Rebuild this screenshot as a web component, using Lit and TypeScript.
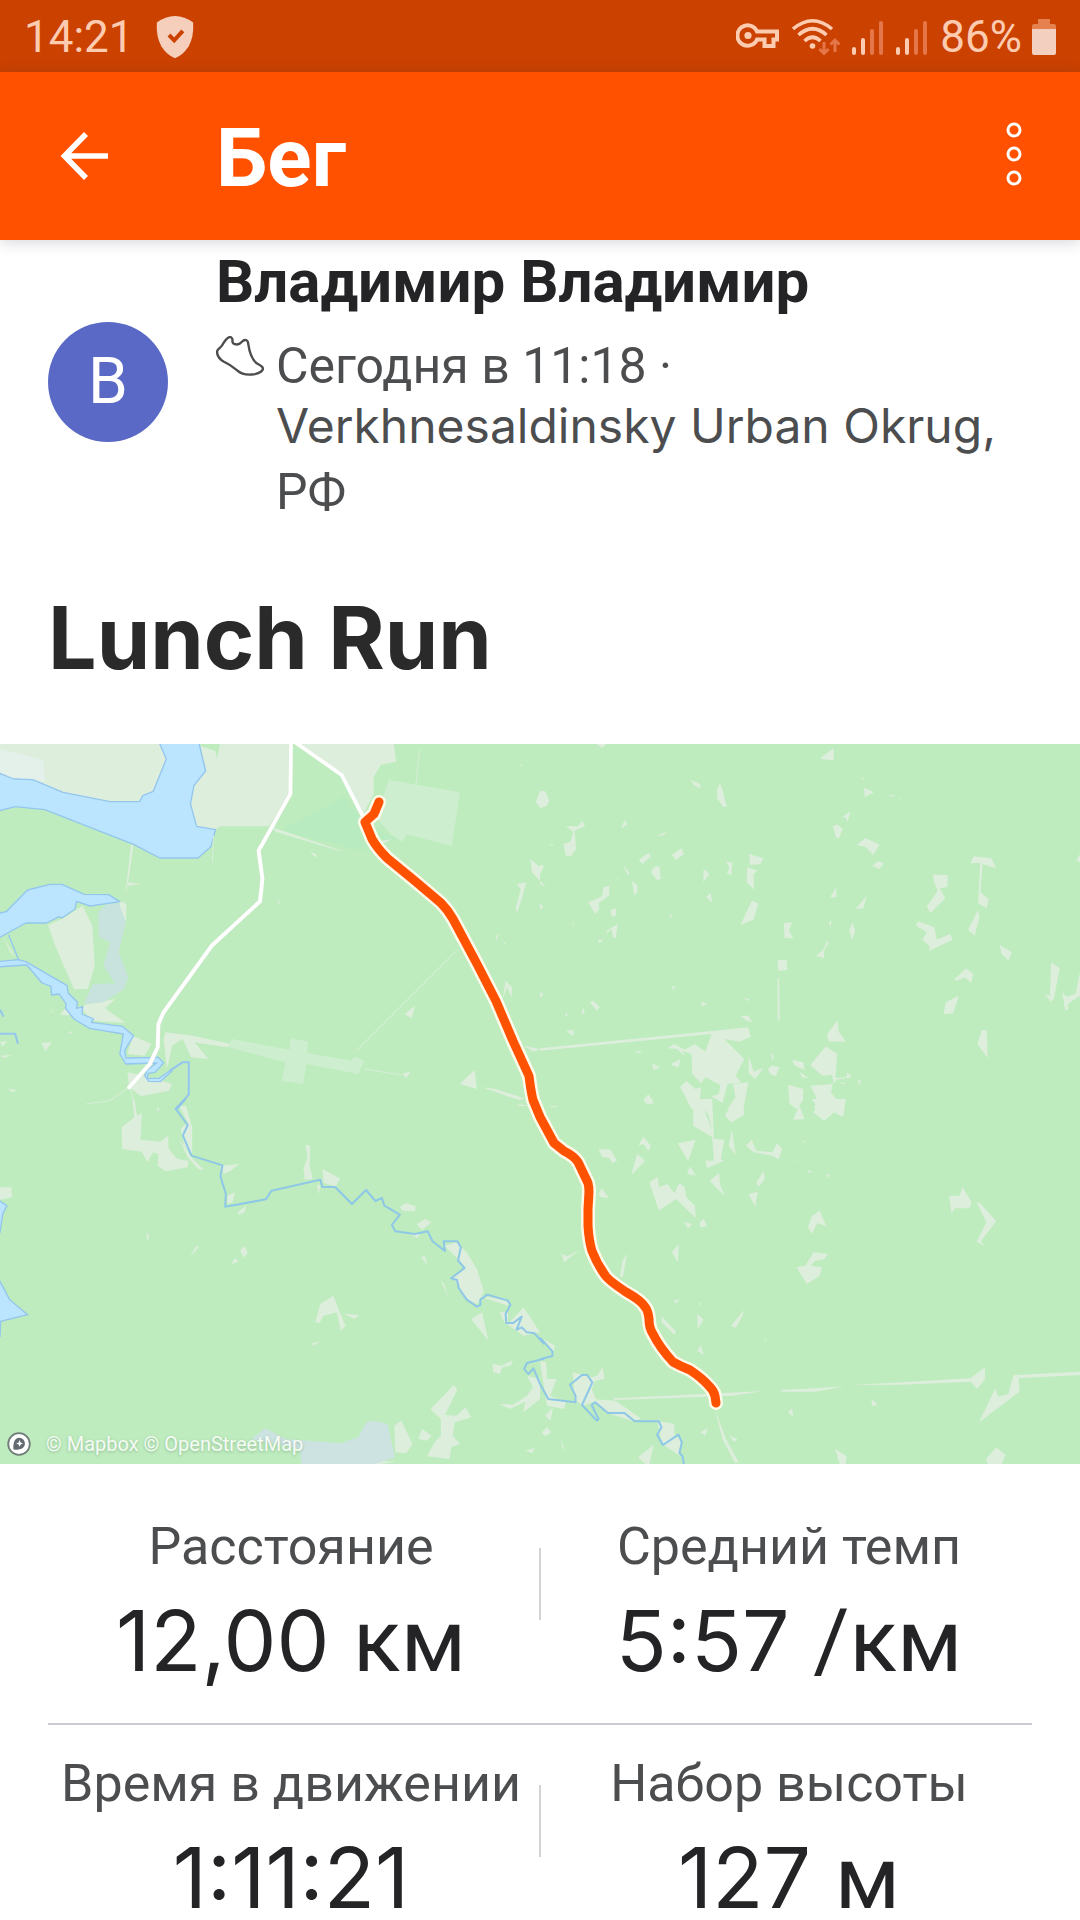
import { LitElement, html, css, svg } from "lit";
import { customElement, property } from "lit/decorators.js";

/* The map is surveyed in four tiles; each tile has its own grid, scaled into map units. */
const TILE_SCALE = "scale(.344388 .333333)";
const tile = (x: number, y: number) => `translate(${x} ${y}) ${TILE_SCALE}`;

const CLEARINGS_NW = [
  "582,22 625,35 630,60 640,10 845,10 845,165 780,262 640,262 625,272 571,262 553,195 563,140 597,96",
  "862,10 1143,10 1150,68 1105,78 1085,115 1085,165 1050,235 992,108",
  "140,558 180,540 240,500 268,560 275,680 255,750 215,750 160,620",
  "245,797 335,780 305,808 365,852 265,845 240,812",
  "200,790 240,830 175,828", "385,890 440,915 420,950 370,945",
  "370,1000 420,1010 500,1035 490,1055 410,1072 375,1045",
  "388,318 372,430 365,470 368,430 380,318", "372,430 410,434 372,440",
  "350,485 367,495 366,550 345,500", "10,595 45,655 30,640",
  "480,880 560,890 670,915 660,925 565,910 605,960 555,955 530,900 500,920 485,990 475,900",
  "900,340 918,345 918,357", "790,265 1000,338 985,335 800,278", "805,480 816,497 808,492",
  "1175,825 1205,800 1195,838", "1335,1035 1378,993 1385,1050", "1400,1045 1440,1050 1520,1078 1510,1084",
  "1168,1005 1192,997 1180,1017", "1500,435 1528,430 1515,480 1502,520 1497,510 1512,450",
  "1540,360 1568,385 1568,425 1545,400", "1468,725 1487,745 1485,775 1472,745 1460,780",
  "1440,590 1448,585 1440,605", "1460,605 1472,617 1465,615", "1568,155 1568,205 1556,190",
  "120,912 150,910 132,937", "0,910 22,906 8,922", "0,950 35,948 12,957", "20,1050 46,1052 40,1060",
  "150,820 156,805 145,822", "198,880 212,876 205,884", "1510,75 1517,80 1511,82",
  "1520,920 1568,930 1550,938", "1085,310 1140,300 1110,315", "1500,1095 1540,1100 1510,1102",
];

const FIELDS_NW = [
  "1130,123 1235,142 1335,160 1312,322 1205,292 1180,285 1170,308 1140,290 1095,240 1110,180",
  "672,900 840,932 845,898 895,908 890,942 1020,965 1030,952 1058,965 1040,1005 890,975 880,1035 818,1025 830,970 665,925",
];

const CLEARINGS_NE = [
  "165,15 192,15 180,26", "815,56 853,28 853,64 818,60", "435,122 465,135 466,148 450,140",
  "515,150 522,133 530,152 542,203 532,203 514,178", "0,155 15,157 27,185 18,202 0,207",
  "75,262 110,262 122,245 131,262 100,275 105,330 90,350 75,350 68,315 88,308 97,278",
  "235,270 245,243 254,255 245,262", "340,290 372,277 355,290", "287,362 315,342 322,352 297,375",
  "383,348 410,328 418,345 395,363", "322,400 332,383 346,381 351,420 340,423",
  "240,375 260,402 255,408", "268,425 283,440 282,462 273,467", "475,390 492,405 474,430",
  "540,367 559,372 555,408 542,403 550,388", "607,345 648,358 640,376 610,377",
  "602,385 632,395 620,405 622,452 600,430", "615,485 634,493 620,542 582,558",
  "483,475 495,462 501,491", "140,490 180,472 184,445 202,440 200,470 170,492 172,512 160,525",
  "206,512 220,508 221,532 207,532", "193,575 225,556 220,598 213,597 207,570 195,583",
  "168,602 184,603 173,613", "93,560 100,545 95,565", "218,408 230,425 224,420", "377,520 385,540 378,535",
  "708,552 732,550 723,575 736,598 710,597", "690,662 716,663 718,693 692,695",
  "690,718 694,718 696,843 690,840", "850,462 860,443 861,475 842,475", "917,510 947,472 940,508",
  "877,235 902,216 893,248 887,235", "850,260 865,257 879,270 868,298 860,296",
  "920,318 945,297 986,317 967,348 945,323", "965,380 982,366 999,373 985,390",
  "941,146 970,160 943,174", "932,115 940,118 938,124", "1010,167 1027,169 1025,174", "1045,175 1052,178 1046,180",
  "898,575 907,550 915,575 907,602", "802,650 822,632 834,606 838,612 824,637 825,658",
  "838,550 846,545 844,565", "1141,407 1184,408 1183,444 1160,448 1177,478 1133,523 1123,502 1155,455 1145,432",
  "1260,352 1310,358 1325,388 1285,375 1279,460 1303,480 1297,508 1272,493 1275,440 1278,372 1250,372",
  "1272,513 1276,535 1262,590 1243,572", "1097,547 1145,565 1152,602 1190,585 1199,602 1130,635 1132,622 1110,602 1123,580 1092,560",
  "1335,618 1370,640 1360,665 1340,645", "1202,722 1237,688 1258,705 1252,733 1235,715 1210,725",
  "1178,790 1216,770 1200,823 1172,826", "1484,670 1509,688 1492,780 1482,788 1467,765 1481,770",
  "1516,760 1530,773 1555,765 1568,700 1568,770 1532,795 1534,813 1525,813",
  "1283,873 1297,875 1300,958 1270,915", "1568,345 1568,370 1558,365",
  "0,928 500,876 604,865 612,893 580,908 535,900 593,960 568,1010 585,1030 545,1035 530,1092 497,1072 520,1065 523,1038 480,1015 468,1033 442,1005 440,945 415,935 420,950 398,930 370,928 390,915 420,932 450,915 480,938 498,885 0,935",
  "833,885 864,845 868,880 889,908 838,907", "785,978 830,922 863,945 858,1017 890,1015 893,1000 905,1015 860,1022 853,1035 848,1008 820,1010",
  "732,962 765,970 768,993 740,980", "755,1000 780,1018 760,1015", "662,990 672,980 695,985 685,1012 668,1005",
  "606,950 620,998 648,988 625,1020 606,1002", "672,940 679,950 674,968", "380,975 408,960 402,985 385,980",
  "325,973 348,985 330,993", "270,935 302,938 285,942", "720,1037 765,1050 763,1085 745,1110 725,1095",
  "785,1040 850,1035 845,1060 860,1080 850,1110 797,1110 802,1075", "560,1035 605,1030 597,1075 590,1110 545,1110 568,1075",
  "407,1043 425,1025 450,1050 468,1045 460,1110 440,1110", "302,1080 315,1065 330,1095 305,1093",
  "75,875 98,873 97,892", "145,790 155,785 173,805 165,815", "582,830 605,830 617,850 600,845",
  "465,790 484,792 473,803", "585,777 606,780 610,787", "383,740 392,743 387,755", "120,825 126,805 130,823",
  "73,832 77,820 80,832", "0,760 11,765 0,777", "0,378 12,380 3,400 0,405", "0,425 18,445 0,435",
  "922,1025 932,1020 928,1040", "875,1030 890,1033 875,1035", "0,490 10,508 0,510", "25,315 43,317 35,320",
];

const CLEARINGS_SW = [
  "353,85 390,55 385,0 390,0 398,50 412,42 408,122 465,128 488,110 490,150 515,180 547,185 545,205 480,217 458,200 460,165 445,160 428,190 412,158 355,150",
  "520,20 540,20 558,85 558,170 535,140 525,90 545,70", "520,120 560,180 592,212 575,210 545,175",
  "640,200 695,195 670,215 650,225", "660,290 683,280 675,310 660,315", "690,340 715,320 710,340 692,347",
  "0,265 33,265 34,295 0,302", "887,137 900,140 899,200 908,240 885,242 881,210 893,175",
  "936,210 987,238 975,262 940,252", "920,255 930,260 925,287", "552,473 570,440 577,445",
  "425,400 434,412 428,427", "697,455 710,440 719,460 710,477", "673,495 680,478 695,487", "455,25 463,30 460,40",
  "1160,325 1180,312 1207,322 1205,337 1170,335", "1210,375 1235,360 1253,370 1225,393",
  "1190,405 1220,405 1212,417", "1222,475 1233,470 1243,500", "1280,545 1290,555 1302,595",
  "1290,440 1325,430 1355,460 1385,510 1405,578 1385,615 1350,600 1330,560 1315,535 1350,510 1330,480",
  "1395,590 1480,605 1475,620 1400,595", "1450,640 1475,640 1475,675 1520,625 1568,700 1520,710 1465,670",
  "1368,660 1400,640 1418,725", "915,670 930,615 968,590 985,635 1003,680 990,695 978,640 940,650 928,672",
  "998,645 1043,648 1030,660", "905,733 930,728 910,740", "1430,795 1458,800 1490,783 1482,800 1458,805 1452,825 1432,820",
  "1250,930 1318,858 1328,872 1292,948 1325,950 1352,925 1368,955 1320,970 1315,1010 1335,1035 1310,1045 1305,1080 1240,1072 1262,1030 1280,1010 1280,960",
  "1145,980 1165,965 1198,1035 1180,1062 1148,1060", "1215,1020 1225,990 1253,1010 1240,1025",
  "1450,915 1490,917 1530,890 1548,865 1530,830 1568,840 1568,900 1520,940 1525,908 1480,930", "1525,1055 1553,1047 1545,1062",
  "1100,1085 1150,1088 1090,1097",
];

const CLEARINGS_SE = [
  "400,0 500,0 505,120 535,122 525,180 535,185 485,208 480,185 505,185 500,115 445,80 445,20 465,0 500,95 490,50 455,0",
  "563,0 590,0 592,48 555,70 537,50", "303,0 330,0 315,15", "745,0 768,60 735,62 750,25", "725,0 765,0 745,18",
  "790,0 888,0 880,55 855,40 825,65 793,40 805,25", "400,133 452,122 430,187", "435,202 453,230 427,225",
  "557,92 568,168 548,140", "285,140 300,113 322,140 315,155 300,135", "282,165 305,185 265,228",
  "170,150 205,152 224,185 210,193 202,178 180,173", "598,140 615,122 628,155 675,160 688,132 703,150 693,180 672,170 620,160",
  "493,245 520,222 523,258 537,290 510,265", "628,250 650,217 652,240 635,263", "605,285 632,278 625,322",
  "318,250 342,233 345,265 370,255 390,283 405,252 420,265 425,295 450,320 452,357 395,300 345,335",
  "170,285 180,268 200,298 175,293", "418,370 442,375 430,388", "465,370 475,360 485,382 465,385",
  "778,385 790,350 812,335 832,382 805,372 790,405", "795,460 837,465 825,480 800,485 785,500 818,505 812,530 775,555 745,505 770,500",
  "1188,290 1218,290 1227,265 1253,310 1247,328 1205,328 1195,343", "1268,310 1278,312 1325,367 1280,427 1290,440 1268,428 1296,370",
  "62,465 80,472 115,452 100,465 70,490", "232,530 240,485 253,463 240,535", "383,460 403,435 400,490",
  "352,650 395,698 390,707 355,672", "457,645 475,662 458,690", "555,680 592,633 588,650 568,687",
  "388,605 405,600 395,615", "457,755 467,738 475,768", "462,615 467,608 466,622", "650,722 658,724 655,728",
  "215,898 480,885 650,876 560,890 215,903", "697,873 800,868 885,862 800,878 705,878", "905,858 1050,850 1250,838 1292,805 1292,840 1270,870 1250,848 1050,857",
  "1375,828 1568,818 1568,828 1390,838 1392,878 1275,970 1322,868 1330,893 1360,885",
  "962,898 980,918 964,922", "720,940 732,928 735,955", "508,930 540,1020 578,1092 565,1090 530,1020",
  "465,1000 487,988 480,1010", "550,1010 573,1020 565,1030", "857,1050 890,1072 888,1095 870,1095",
  "1295,1080 1325,1045 1352,1068 1340,1095 1300,1095", "285,1075 330,1037 318,1095 305,1095",
  "155,900 220,905 295,960 265,965 190,940", "340,965 390,975 390,1010 410,1020 405,1070 355,1035",
  "0,785 18,790 20,840 48,840 30,890 75,910 70,930 20,920", "95,820 150,835 165,830 182,805 188,840 160,845 150,870 165,905 125,920 100,900",
  "15,950 38,925 30,965", "5,1000 20,985 33,1000 15,1012", "60,1020 75,1058 65,1045", "10,720 43,740 40,760",
  "735,178 765,195 740,182", "778,212 790,218 780,222", "760,122 772,128 768,131", "832,225 842,228 838,238", "20,20 48,22 48,26",
];

const ROUTE =
  "M379 58L374 70L365 78L372 95Q377 104 387 114L415 137L441 159Q448 166 453 175L477 220L496 257L513 297L529 332Q531 348 533 356L540 373L554 399L564 407Q574 412 578 418L588 439Q589 443 589 448L588 465V482Q589 497 592 507Q597 520 605 531Q608 536 626 548Q642 557 645 563Q648 566 649 575Q649 584 653 590Q660 604 673 618Q680 622 690 626Q702 634 709 642Q714 647 715 652L716 659";

const polys = (list: string[]) => list.map((p) => svg`<polygon points=${p}></polygon>`);

@customElement("route-map")
export class RouteMap extends LitElement {
  static styles = css`
    :host {
      display: block;
      position: relative;
    }
    .map {
      display: block;
      width: 100%;
      height: auto;
    }
    .credits {
      position: absolute;
      left: 7px;
      bottom: 6px;
      display: flex;
      align-items: center;
      gap: 15px;
      font: 400 20px/28px Roboto, "Liberation Sans", sans-serif;
    }
    .credits svg {
      display: block;
      width: 24px;
      height: 24px;
    }
    .links {
      display: flex;
      gap: 5px;
    }
    a {
      color: #f4fbf4;
      text-decoration: none;
      text-shadow: 0 1px 3px rgba(60, 100, 70, 0.35);
    }
  `;

  render() {
    return html`
      <svg class="map" viewBox="0 0 1080 720" role="img" aria-label="Lunch Run">
        <rect width="1080" height="720" fill="#beecbe"></rect>
        <g transform=${tile(0, -5)}>
          <polygon fill="#b9ebc0" points="1000,170 815,275 1050,335 1150,300 1050,245"></polygon>
          <polygon fill="#deeedd" points="0,0 470,0 483,60 445,157 415,170 405,188 320,188 183,160 95,122 40,120 0,103"></polygon>
          <polygon fill="#e4f0ea" points="0,30 125,62 130,130 95,122 40,120 0,103"></polygon>
          <g fill="#ceefcf">${polys(FIELDS_NW)}</g>
          <g fill="#deeedd">${polys(CLEARINGS_NW)}</g>
          <polygon fill="#c8e2dd" points="310,495 345,492 365,550 345,640 372,715 360,750 300,790 243,795 270,735 335,733 300,680 320,610 287,595 285,520"></polygon>
          <g fill="#bbe5ff" stroke="#94c6ee" stroke-width="4" stroke-linejoin="round">
            <polygon points="-9,100 40,120 95,122 183,160 320,188 405,188 415,170 445,157 483,60 460,5 576,5 597,96 563,140 553,195 571,262 626,272 612,323 575,357 464,357 388,316 130,212 45,203 -9,217"></polygon>
            <polygon points="-9,524 18,518 80,453 145,436 180,436 245,466 315,467 348,488 262,501 222,487 218,510 180,537 172,533 135,552 75,552 -9,600"></polygon>
            <polygon points="-9,668 52,662 75,668 195,740 198,762 225,790 222,808 240,803 238,825 272,840 265,850 355,862 388,890 362,935 366,957 460,955 475,972 450,1000 430,1003 428,1018 462,1018 493,995 500,995 465,1028 432,1027 420,1010 428,992 455,972 365,975 348,945 358,885 260,868 215,840 190,808 192,795 172,765 150,768 148,742 122,732 78,678 -9,684"></polygon>
            <path fill="none" d="M25 587L54 662"></path>
          </g>
          <g fill="none" stroke="#94c6ee" stroke-width="6">
            <path d="M493 995L530 970H548V1067L508 1112"></path>
            <path d="M0 884H44L52 914"></path>
            <path d="M0 812L10 833"></path>
          </g>
          <g fill="none" stroke="#d6eed6" stroke-width="3">
            <path d="M1035 935L1330 630"></path>
            <path d="M1058 990L1165 1008"></path>
            <path d="M1218 30L1208 135"></path>
            <path d="M375 1045L318 1085L250 1095"></path>
            <path d="M380 1050L390 1110"></path>
            <path d="M620 290L617 370"></path>
          </g>
          <g fill="none" stroke-linejoin="round" stroke-linecap="round">
            <path stroke="#d5e5d5" stroke-width="13" d="M845 5L843 165L751 335L762 420L755 487L615 620L475 820L460 855L458 925L435 975L375 1045"></path>
            <path stroke="#fff" stroke-width="11" d="M845 5L843 165L751 335L762 420L755 487L615 620L475 820L460 855L458 925L435 975L375 1045"></path>
            <path stroke="#fff" stroke-width="11" d="M850 5L992 108L1060 245"></path>
          </g>
        </g>
        <g transform=${tile(540, -5)} fill="#deeedd">${polys(CLEARINGS_NE)}</g>
        <g transform=${tile(0, 355)}>
          <g fill="#deeedd">${polys(CLEARINGS_SW)}</g>
          <g fill="#cce3e1">
            <polygon points="730,1020 770,988 830,1020 990,1033 1040,1015 1065,968 1090,966 1125,975 1147,1075 1090,1095 875,1095 870,1050"></polygon>
          </g>
          <g fill="#bbe5ff" stroke="#94c6ee" stroke-width="4">
            <polygon points="-9,300 20,320 8,345 0,400 -9,410"></polygon>
            <polygon points="-9,530 28,602 80,647 2,667 0,712 -9,712"></polygon>
          </g>
          <path fill="none" stroke="#8ec8e6" stroke-width="6" stroke-linejoin="round"
            d="M541 -3L512 32L545 78L531 110L556 170L646 199L640 232L656 285L654 323L772 301L788 275L930 242L936 264H973L1022 315L1063 273L1090 306L1109 297L1116 320L1161 347L1138 378L1148 397L1205 405L1242 397L1256 427L1292 456L1288 427H1328L1338 445L1330 485L1349 507L1310 538L1327 543L1332 567L1355 602L1385 623L1395 618V602L1415 587L1475 605L1482 618L1468 645L1470 672H1490L1515 653L1500 692L1515 685L1530 700L1552 703L1580 735"></path>
          <path fill="none" stroke="#8ec8e6" stroke-width="6" stroke-linejoin="round"
            d="M1580 779L1530 792L1522 810L1534 825L1549 808L1568 855"></path>
        </g>
        <g transform=${tile(540, 355)}>
          <g fill="#deeedd">${polys(CLEARINGS_SE)}</g>
          <path fill="none" stroke="#8ec8e6" stroke-width="6" stroke-linejoin="round"
            d="M0 716L36 757V771L0 781M0 855L24 900L103 910V890L87 857L122 828H137L152 850L122 918L165 965L170 960L150 918L160 910L197 942H245L275 967H345L353 985L340 1007L357 1038L402 1007L412 1030L405 1062L414 1072L418 1098"></path>
        </g>
        <g fill="none" stroke-linejoin="round" stroke-linecap="round">
          <path stroke="#fff9ea" stroke-width="14" d=${ROUTE}></path>
          <path stroke="#ff5200" stroke-width="9" d=${ROUTE}></path>
        </g>
      </svg>
      <div class="credits">
        <svg viewBox="0 0 24 24" aria-hidden="true">
          <circle cx="12" cy="12" r="10.8" fill="#fff" stroke="#707d78" stroke-width="1.8"></circle>
          <path d="M6.4 17.6C6 10 8 5.800 12.400 5.800a5.600 5.600 0 0 1 5.500 5.600c0 4.600-4.300 6.600-11.500 6.200z" fill="#636b70"></path>
          <path d="M12.600 8l1 2.400 2.400 1-2.400 1-1 2.400-1-2.400-2.400-1 2.400-1z" fill="#fff"></path>
        </svg>
        <div class="links">
          <a href="#mapbox">© Mapbox</a>
          <a href="#openstreetmap">© OpenStreetMap</a>
        </div>
      </div>
    `;
  }
}

@customElement("status-bar")
export class StatusBar extends LitElement {
  static styles = css`
    :host {
      display: flex;
      align-items: center;
      height: 72px;
      box-sizing: border-box;
      padding: 2px 24px 0;
      background: #cb4100;
      color: #fdcbb0;
      font: 400 44px/52px Roboto, "Liberation Sans", sans-serif;
    }
    svg {
      display: block;
      flex: none;
    }
    .shield {
      margin-left: 22px;
    }
    .right {
      display: flex;
      align-items: center;
      gap: 12px;
      margin-left: auto;
    }
    .charge {
      display: flex;
      align-items: center;
      gap: 10px;
    }
  `;

  private signal() {
    return html`<svg width="32" height="36" viewBox="0 0 32 36" aria-hidden="true">
      <g fill="#fdcbb0">
        <rect x="0" y="28" width="4" height="8" rx="2"></rect>
        <rect x="9" y="19" width="4" height="17" rx="2"></rect>
      </g>
      <g fill="#e5764a">
        <rect x="18" y="10" width="4" height="26" rx="2"></rect>
        <rect x="27" y="2" width="4" height="34" rx="2"></rect>
      </g>
    </svg>`;
  }

  render() {
    return html`
      <span>14:21</span>
      <svg class="shield" width="38" height="44" viewBox="0 0 38 44" aria-hidden="true">
        <path fill="#f6cfbc" d="M.8 7.6Q9.5 1 19 1q9.500 0 18.200 6.600Q38 22 32.600 31.500 26.500 40.500 19 43.200 11.500 40.500 5.400 31.500 0 22 .8 7.600z"></path>
        <path fill="none" stroke="#cb4100" stroke-width="4" d="M13 20l5.200 5.400 8.600-9.600"></path>
      </svg>
      <div class="right">
        <svg width="44" height="28" viewBox="0 0 44 28" aria-hidden="true">
          <path fill="none" stroke="#fdcbb0" stroke-width="4" d="M21 8.500h20v8h-3.500V23h-9v-6.500H21A10.200 10.200 0 1 1 21 8.500z"></path>
          <circle cx="12" cy="12.500" r="3.600" fill="#fdcbb0"></circle>
        </svg>
        <svg width="48" height="38" viewBox="0 0 48 38" aria-hidden="true">
          <g fill="none" stroke="#fdcbb0" stroke-width="3.600">
            <path d="M1 11Q20.500-5.500 40 11"></path>
            <path d="M6.500 17Q20.500 4.500 34.500 17"></path>
            <path d="M12.500 23Q20.500 15.500 28.500 23"></path>
          </g>
          <circle cx="20.500" cy="28" r="2.800" fill="#fdcbb0"></circle>
          <path fill="none" stroke="#e5764a" stroke-width="3" d="M32 24v11M27.500 31l4.500 4.500 4.500-4.500M43 34V22M38.500 26.500l4.500-4.500 4.500 4.500"></path>
        </svg>
        ${this.signal()} ${this.signal()}
        <div class="charge">
          <span>86%</span>
          <svg width="24" height="36" viewBox="0 0 24 36" aria-hidden="true">
            <path fill="#e5814f" d="M6 0h12v5h4q2 0 2 2v5H0V7q0-2 2-2h4z"></path>
            <path fill="#f3cfbf" d="M0 10h24v24q0 2-2 2H2q-2 0-2-2z"></path>
          </svg>
        </div>
      </div>
    `;
  }
}

@customElement("stat-cell")
export class StatCell extends LitElement {
  @property() label = "";
  @property() value = "";
  @property() unit = "";

  static styles = css`
    :host {
      display: flex;
      flex-direction: column;
      align-items: center;
      gap: 24px;
      min-width: 0;
      white-space: nowrap;
    }
    .label {
      color: #4c4d4f;
      font: 400 52px/59px Roboto, "Liberation Sans", sans-serif;
    }
    .value {
      color: #242426;
      font: 400 84px/82px Inter, "Liberation Sans", sans-serif;
    }
    .unit {
      font-family: Roboto, "Liberation Sans", sans-serif;
      font-size: 88px;
      line-height: 0;
    }
  `;

  render() {
    return html`
      <span class="label">${this.label}</span>
      <span class="value">${this.value}${this.unit ? html` <span class="unit">${this.unit}</span>` : ""}</span>
    `;
  }
}

interface Stat {
  label: string;
  value: string;
  unit: string;
}

@customElement("app-root")
export class AppRoot extends LitElement {
  private rows: [Stat, Stat][] = [
    [
      { label: "Расстояние", value: "12,00", unit: "км" },
      { label: "Средний темп", value: "5:57", unit: "/км" },
    ],
    [
      { label: "Время в движении", value: "1:11:21", unit: "" },
      { label: "Набор высоты", value: "127", unit: "м" },
    ],
  ];

  static styles = css`
    :host {
      display: block;
      min-height: 100vh;
      background: #fff;
      color: #242426;
      font-family: Roboto, "Liberation Sans", sans-serif;
    }
    .app-bar {
      display: flex;
      align-items: center;
      height: 168px;
      padding: 0 32px 0 48px;
      background: #ff5100;
      color: #fff;
      box-shadow: 0 2px 14px rgba(40, 40, 60, 0.2);
    }
    button {
      display: flex;
      align-items: center;
      justify-content: center;
      width: 72px;
      height: 96px;
      padding: 0;
      border: 0;
      background: none;
      color: inherit;
    }
    .app-title {
      flex: 1;
      margin: 0 0 0 96px;
      padding-top: 4px;
      font: 700 82px/96px Roboto, "Liberation Sans", sans-serif;
    }
    .athlete {
      display: flex;
      align-items: flex-start;
      gap: 48px;
      padding: 8px 48px 0;
    }
    .avatar {
      display: flex;
      flex: none;
      align-items: center;
      justify-content: center;
      width: 120px;
      height: 120px;
      margin-top: 74px;
      border-radius: 50%;
      background: #5a69c5;
      color: #fff;
      font-size: 64px;
      line-height: 72px;
    }
    .about {
      flex: 1;
      min-width: 0;
    }
    .name {
      margin: 0 0 20px;
      font-weight: 700;
      font-size: 60px;
      line-height: 68px;
    }
    .meta {
      display: flex;
      align-items: flex-start;
      gap: 12px;
    }
    .meta svg {
      display: block;
      flex: none;
    }
    .place {
      margin: 0;
      color: #4c4d4f;
      font: 400 48px/59px Inter, Roboto, sans-serif;
    }
    .when,
    .country {
      font-family: Roboto, "Liberation Sans", sans-serif;
      font-size: 50px;
    }
    .country {
      display: block;
      padding-top: 8px;
    }
    .activity-title {
      margin: 64px 48px 54px;
      color: #2a2a2b;
      font: 700 86px/104px Inter, "Liberation Sans", sans-serif;
    }
    .stats {
      padding: 24px 48px 0;
    }
    .row {
      display: grid;
      grid-template-columns: 1fr 2px 1fr;
      column-gap: 5px;
      padding: 29px 0 41px;
      border-bottom: 2px solid #cacad2;
    }
    .row:last-child {
      padding-bottom: 0;
      border-bottom: 0;
    }
    .rule {
      height: 72px;
      margin-top: 31px;
      background: #d3d3d6;
    }
  `;

  render() {
    return html`
      <status-bar></status-bar>
      <header class="app-bar">
        <button type="button" aria-label="Назад">
          <svg width="48" height="48" viewBox="0 0 48 48" aria-hidden="true">
            <path fill="none" stroke="#fff" stroke-width="5.600" d="M48 24H5M26 2L4.500 24 26 46"></path>
          </svg>
        </button>
        <h1 class="app-title">Бег</h1>
        <button type="button" aria-label="Ещё">
          <svg width="20" height="68" viewBox="0 0 20 68" aria-hidden="true">
            <g fill="none" stroke="#fff" stroke-width="3">
              <circle cx="12" cy="8" r="6"></circle>
              <circle cx="12" cy="32" r="6"></circle>
              <circle cx="12" cy="56" r="6"></circle>
            </g>
          </svg>
        </button>
      </header>
      <main>
        <section class="athlete">
          <div class="avatar">В</div>
          <div class="about">
            <h2 class="name">Владимир Владимир</h2>
            <div class="meta">
              <svg width="48" height="40" viewBox="0 0 48 40" aria-hidden="true">
                <path fill="none" stroke="#4c4d4f" stroke-width="2.400" stroke-linejoin="round"
                  d="M12.500 1.500c2-1 4 0 4 2.500-.5 3 1 4.500 4.500 4.500 3.500-.3 4-1.500 6-3.800 2.500-1.700 5.200-.4 5.200 3C33.500 17 36 24 41 27.500c3.500 2 6 3 6 5.300-.5 2.500-3 4-8 5.300-6 1-13.500.2-17.500-3.500C16 30 12 27.500 7.500 25.500 3.500 23 1 19 1 15.500 1.500 13 4.500 12 6 9.500 8 6 10 3 12.500 1.500z"></path>
              </svg>
              <p class="place">
                <span class="when">Сегодня в 11:18 ·</span><br />Verkhnesaldinsky Urban Okrug,
                <span class="country">РФ</span>
              </p>
            </div>
          </div>
        </section>
        <h2 class="activity-title">Lunch Run</h2>
        <route-map></route-map>
        <section class="stats">
          ${this.rows.map(
            ([a, b]) => html`<div class="row">
              <stat-cell .label=${a.label} .value=${a.value} .unit=${a.unit}></stat-cell>
              <div class="rule"></div>
              <stat-cell .label=${b.label} .value=${b.value} .unit=${b.unit}></stat-cell>
            </div>`
          )}
        </section>
      </main>
    `;
  }
}
